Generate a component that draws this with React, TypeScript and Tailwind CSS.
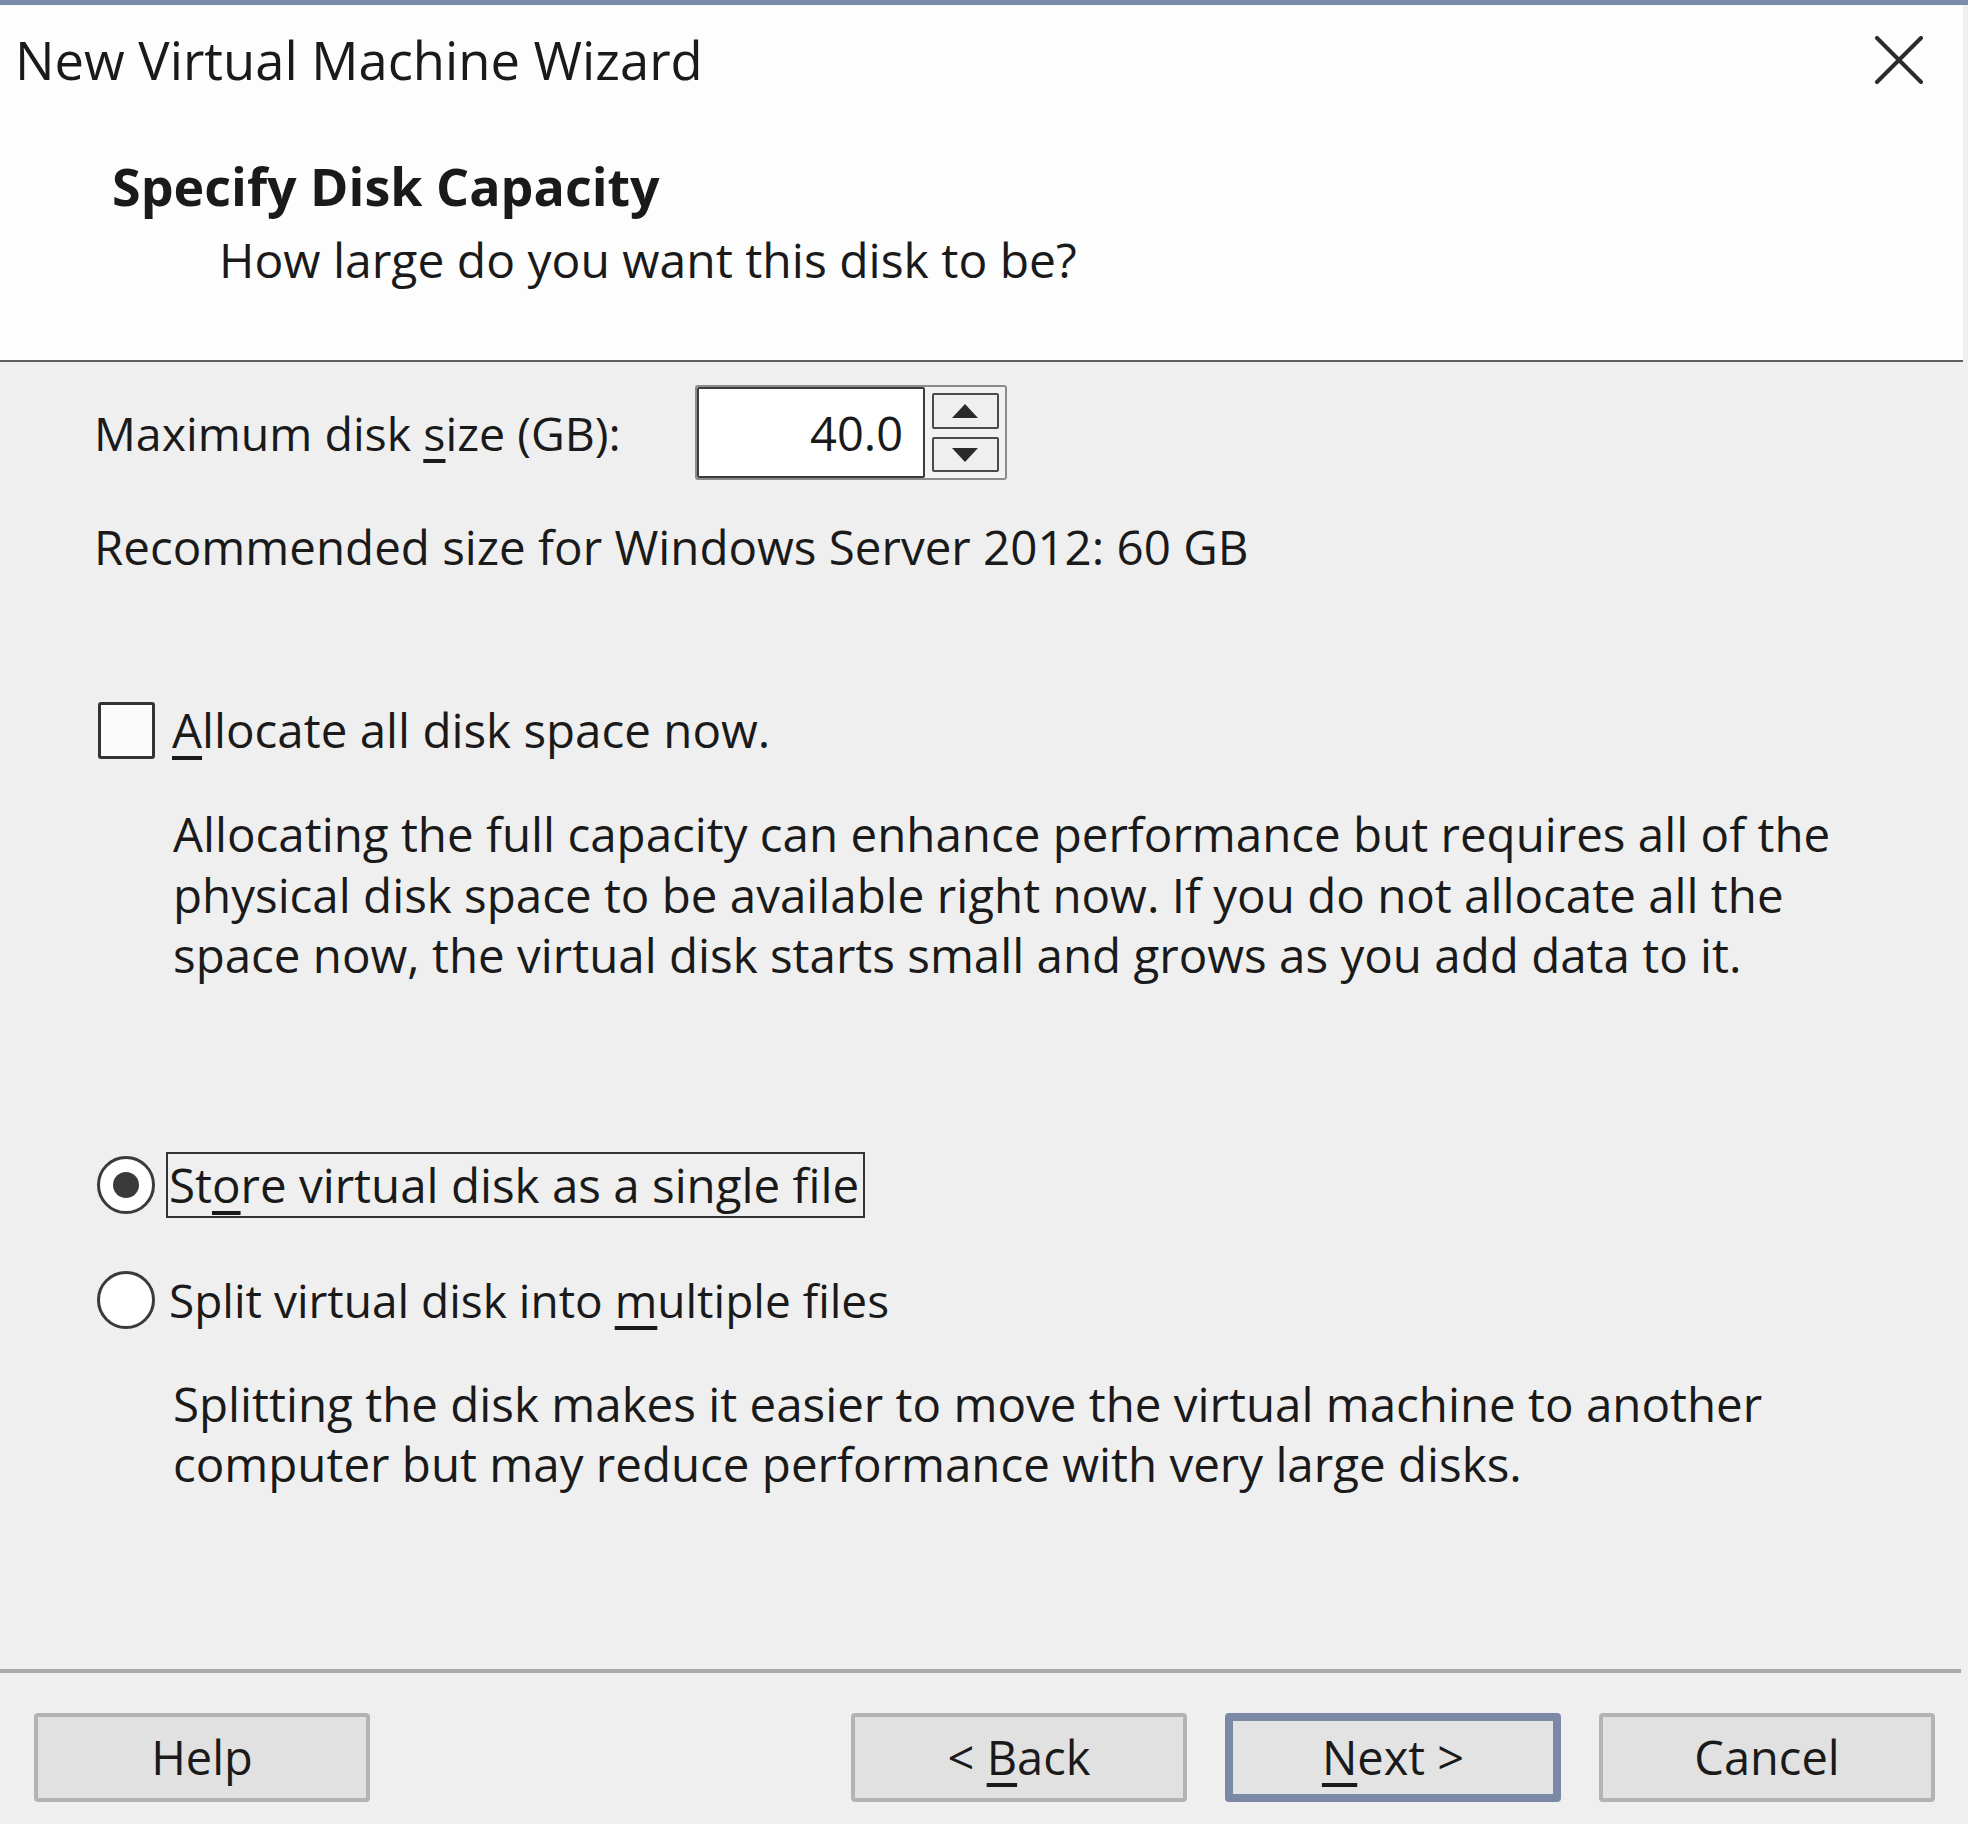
import React from 'react';

function SpinBox() {
  return (
    <div className="flex h-[95px] w-[312px] rounded-[3px] border-2 border-[#8c8c8c] bg-[#f2f2f2]">
      <div className="flex h-full w-[228px] items-center justify-end rounded-[2px] border-2 border-[#3c3c3c] bg-white pr-[20px] text-[47px]">
        40.0
      </div>
      <div className="flex flex-1 flex-col items-center justify-center gap-[8px]">
        <div className="flex h-[36px] w-[67px] items-center justify-center rounded-[2px] border-2 border-[#4a4a4a] bg-[#efefef]">
          <svg width="26" height="14" viewBox="0 0 26 14">
            <path d="M13 0 L26 14 L0 14 Z" fill="#2a2a2a" />
          </svg>
        </div>
        <div className="flex h-[35px] w-[67px] items-center justify-center rounded-[2px] border-2 border-[#4a4a4a] bg-[#efefef]">
          <svg width="26" height="14" viewBox="0 0 26 14">
            <path d="M0 0 L26 0 L13 14 Z" fill="#2a2a2a" />
          </svg>
        </div>
      </div>
    </div>
  );
}

function Radio({ checked }: { checked?: boolean }) {
  return (
    <div className="flex h-[58px] w-[58px] shrink-0 items-center justify-center rounded-full border-[3px] border-[#3a3a3a] bg-white">
      {checked && <div className="h-[26px] w-[26px] rounded-full bg-[#3a3a3a]" />}
    </div>
  );
}

function Button({ children, primary }: { children: React.ReactNode; primary?: boolean }) {
  return (
    <div
      className={
        primary
          ? 'flex h-[89px] w-[336px] items-center justify-center rounded-[4px] border-[8px] border-[#7b89a7] bg-[#e3e3e3] text-[47px]'
          : 'flex h-[89px] w-[336px] items-center justify-center rounded-[4px] border-[4px] border-[#b3b3b3] bg-[#e1e1e1] text-[47px]'
      }
    >
      {children}
    </div>
  );
}

export default function App() {
  return (
    <div className="flex h-[1824px] w-[1968px] flex-col border-t-[5px] border-[#7b8bab] bg-[#efefef] font-['Open_Sans',sans-serif] text-[#1a1a1a]">
      {/* header */}
      <div className="mr-[5px] h-[357px] border-b-2 border-[#5f5f5f] bg-[#fdfdfd]">
        <div className="flex h-[110px] items-center justify-between pl-[15px] pr-[40px]">
          <span className="text-[52.5px] leading-none">New Virtual Machine Wizard</span>
          <svg width="48" height="48" viewBox="0 0 48 48">
            <path d="M2 2 L46 46 M46 2 L2 46" stroke="#2b2b2b" strokeWidth="4" strokeLinecap="round" />
          </svg>
        </div>
        <div className="pl-[112px] pt-[41px] text-[52px] font-bold leading-[60px]">Specify Disk Capacity</div>
        <div className="pl-[219px] pt-[14px] text-[48px] leading-[60px]">How large do you want this disk to be?</div>
      </div>

      {/* body */}
      <div className="flex flex-1 flex-col pl-[94px] text-[47.5px] leading-[60px]">
        <div className="mt-[23px] flex items-center">
          <span className="w-[601px] text-[46.5px]">
            Maximum disk <span className="underline underline-offset-[8px]">s</span>ize (GB):
          </span>
          <SpinBox />
        </div>
        <div className="mt-[37px]">Recommended size for Windows Server 2012: 60 GB</div>

        <div className="mt-[123px] flex h-[60px] items-center">
          <div className="ml-[4px] h-[57px] w-[57px] rounded-[3px] border-[3px] border-[#333] bg-[#fbfbfb]" />
          <span className="ml-[17px]">
            <span className="underline underline-offset-[8px]">A</span>llocate all disk space now.
          </span>
        </div>
        <p className="mt-[44px] pl-[79px] leading-[60.5px]">
          Allocating the full capacity can enhance performance but requires all of the
          <br />
          physical disk space to be available right now. If you do not allocate all the
          <br />
          space now, the virtual disk starts small and grows as you add data to it.
        </p>

        <div className="mt-[166px] flex h-[66px] items-center">
          <div className="ml-[3px]">
            <Radio checked />
          </div>
          <span className="ml-[11px] flex h-[66px] items-center border-2 border-[#333] pl-[1px] pr-[4px]">
            St<span className="underline underline-offset-[8px]">o</span>re virtual disk as a single file
          </span>
        </div>
        <div className="mt-[52px] flex h-[60px] items-center">
          <div className="ml-[3px]">
            <Radio />
          </div>
          <span className="ml-[14px] text-[46px]">
            Split virtual disk into <span className="underline underline-offset-[8px]">m</span>ultiple files
          </span>
        </div>
        <p className="mt-[44px] pl-[79px]">
          Splitting the disk makes it easier to move the virtual machine to another
          <br />
          computer but may reduce performance with very large disks.
        </p>
      </div>

      {/* footer */}
      <div className="mr-[7px] h-[4px] bg-[#a9a9a9]" />
      <div className="flex h-[151px] items-start pl-[34px] pr-[33px] pt-[40px]">
        <Button>Help</Button>
        <div className="ml-auto flex gap-[38px]">
          <Button>
            <span className="whitespace-pre">{'< '}</span>
            <span className="underline underline-offset-[8px]">B</span>ack
          </Button>
          <Button primary>
            <span className="underline underline-offset-[8px]">N</span>
            <span className="whitespace-pre">{'ext >'}</span>
          </Button>
          <Button>Cancel</Button>
        </div>
      </div>
    </div>
  );
}
